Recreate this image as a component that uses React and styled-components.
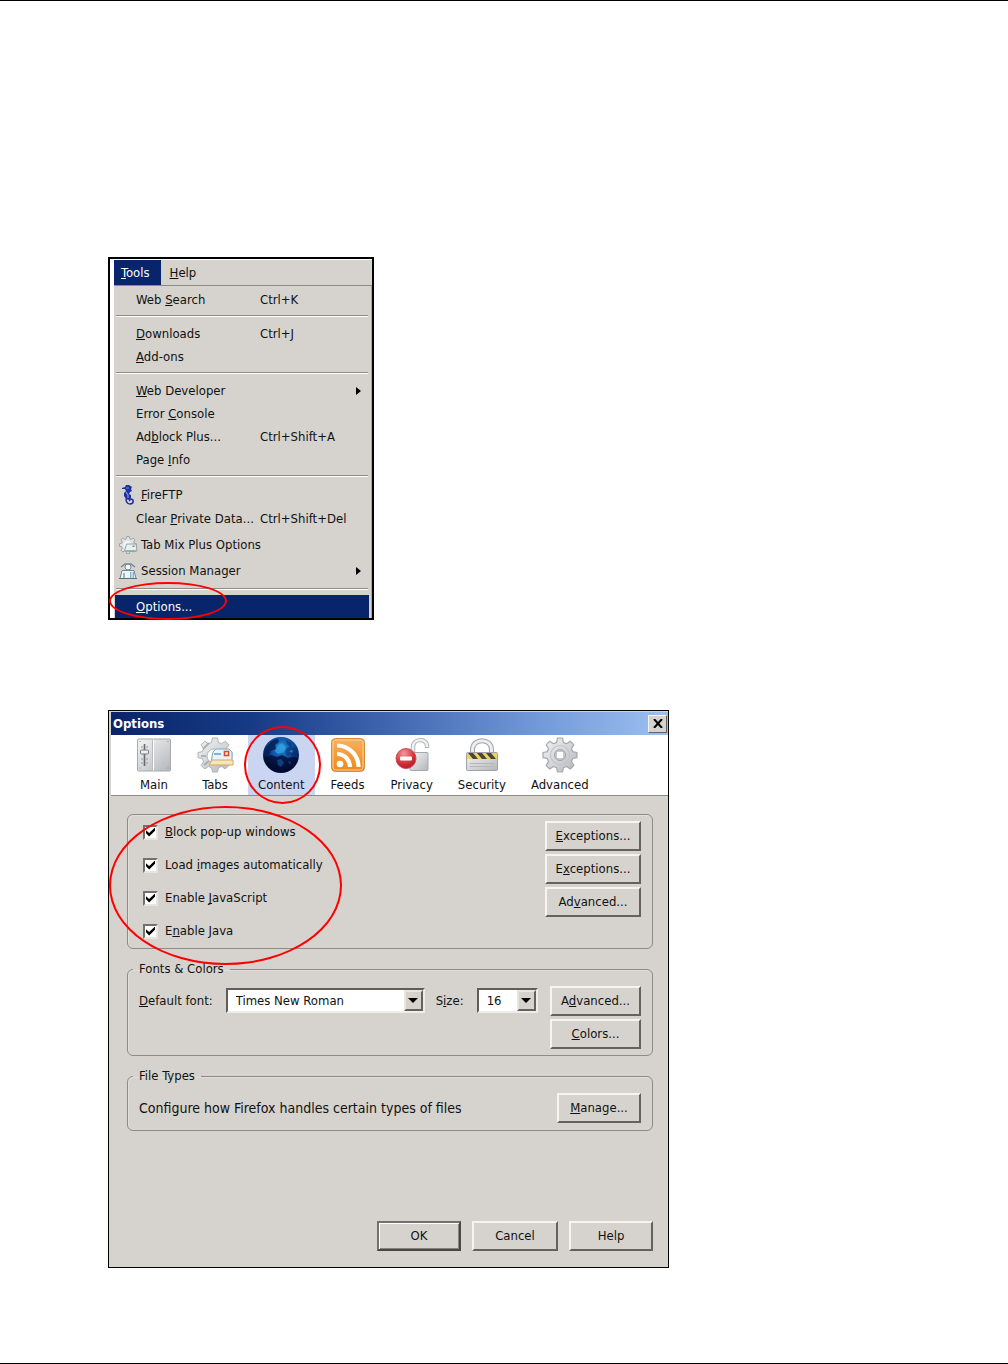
import React from "react";
import styled, { createGlobalStyle, css } from "styled-components";

const GlobalStyle = createGlobalStyle`
  :root {
    --face: #d6d3ce;
    --navy: #08246b;
    --line: #8e8b86;
    --light: #f6f4f0;
    --dark: #65625d;
    --red: #ff0000;
  }
  * {
    box-sizing: border-box;
  }
  body {
    margin: 0;
    background: #fff;
  }
  body, button, select, input {
    color: #111;
    font-family: "DejaVu Sans Condensed", Tahoma, sans-serif;
    font-size: 13px;
    line-height: 16px;
  }
  button {
    margin: 0;
    padding: 0;
    border: 0;
    background: none;
  }
  u {
    text-decoration-skip-ink: none;
  }
`;

const Page = styled.main`
  display: flex;
  flex-direction: column;
  gap: 90px;
  min-height: 100vh;
  padding: 256px 108px 80px;
  border-top: 1px solid #000;
  border-bottom: 1px solid #000;
`;

/* red ring that lies over the highlighted controls */
const Marker = styled.span`
  position: absolute;
  border: 2px solid var(--red);
  border-radius: 50%;
  pointer-events: none;
  z-index: 1;
`;

const OptionsMarker = styled(Marker)`
  left: -6px;
  top: -13px;
  width: 118px;
  height: 38px;
`;

const ContentMarker = styled(Marker)`
  left: -4px;
  top: -9px;
  width: 77px;
  height: 78px;
`;

const ChecksMarker = styled(Marker)`
  left: -34px;
  top: -15px;
  width: 233px;
  height: 159px;
`;

const MenuFrame = styled.section`
  width: 100%;
  max-width: 266px;
  padding: 1px 0 0 4px;
  border: 2px solid #000;
`;

const MenuBar = styled.nav`
  display: flex;
  height: 26px;
  background: var(--face);
  border-bottom: 1px solid var(--line);
`;

const MenuBarItem = styled.button`
  padding: 0 11px 0 7px;
  ${(p) =>
    p.$open &&
    css`
      background: var(--navy);
      color: #fff;
    `}
  & + & {
    padding-left: 9px;
  }
`;

const MenuList = styled.div`
  display: flex;
  flex-direction: column;
  padding: 2px 2px 0 1px;
  background: var(--face);
  border-right: 1px solid #aaa7a2;
`;

const MenuRow = styled.button`
  position: relative;
  display: grid;
  grid-template-columns: ${(p) => (p.$icon ? "26px 119px" : "21px 124px")} 1fr 14px;
  align-items: center;
  height: ${(p) => p.$height || 23}px;
  text-align: left;
  white-space: nowrap;
  ${(p) =>
    p.$selected &&
    css`
      background: var(--navy);
      color: #fff;
    `}
`;

const IconSlot = styled.span`
  display: flex;
  padding-left: 3px;
`;

const Separator = styled.hr`
  flex: none;
  height: 2px;
  margin: 4px 1px 5px;
  border: 0;
  border-top: 1px solid var(--line);
  background: #fff;
`;

const Dialog = styled.section`
  display: flex;
  flex-direction: column;
  width: 100%;
  max-width: 561px;
  background: var(--face);
  border: 1px solid #000;
`;

const TitleBar = styled.header`
  display: flex;
  align-items: center;
  justify-content: space-between;
  height: 23px;
  margin: 1px 0 0 2px;
  padding: 0 1px 0 2px;
  background: linear-gradient(90deg, #0a246a, #163a86 25%, #3f66b0 50%, #7096d8 75%, #9cc0f0);
`;

const Title = styled.h1`
  margin: 0;
  color: #fff;
  font-size: 13px;
  line-height: 16px;
`;

const CloseButton = styled.button`
  display: flex;
  align-items: center;
  justify-content: center;
  width: 19px;
  height: 18px;
  background: var(--face);
  border: 1px solid;
  border-color: var(--light) var(--dark) var(--dark) var(--light);
`;

const Toolbar = styled.nav`
  display: flex;
  gap: 5px;
  height: 61px;
  margin-left: 2px;
  padding-left: 15px;
  background: #fff;
  border-bottom: 1px solid var(--line);
`;

const ToolItem = styled.button`
  position: relative;
  display: flex;
  flex-direction: column;
  align-items: center;
  gap: 2px;
  padding: 0 10px;
  background: ${(p) => (p.$selected ? "#cad6f1" : "none")};
`;

const ToolIcon = styled.svg`
  display: block;
  width: 40px;
  height: 40px;
  margin: 0 -2px;
`;

const Panel = styled.div`
  display: flex;
  flex-direction: column;
  padding: 18px 15px 16px 18px;
`;

const Group = styled.fieldset`
  min-width: 0;
  margin: 0 0 ${(p) => p.$gap}px;
  padding: ${(p) => p.$pad};
  border: 1px solid var(--line);
  border-radius: 6px;
  box-shadow: inset 1px 1px 0 #e2dfda;
`;

const Legend = styled.legend`
  margin-left: -6px;
  padding: 0 6px;
  line-height: 16px;
`;

const Split = styled.div`
  position: relative;
  display: flex;
  justify-content: space-between;
  align-items: ${(p) => p.$align || "flex-start"};
`;

const Checks = styled.div`
  display: flex;
  flex-direction: column;
  gap: 17px;
  padding-top: 3px;
`;

const CheckLabel = styled.label`
  display: flex;
  align-items: center;
  gap: 7px;
`;

const CheckBox = styled.input`
  appearance: none;
  display: grid;
  place-items: center;
  width: 15px;
  height: 15px;
  margin: 0;
  background: #fff;
  border: 2px solid;
  border-color: #74716c #e8e5e0 #e8e5e0 #74716c;
  &:checked::after {
    content: "";
    width: 9px;
    height: 9px;
    background: #000;
    clip-path: polygon(0 30%, 35% 60%, 100% 0, 100% 35%, 35% 100%, 0 65%);
  }
`;

const Description = styled.p`
  margin: 0;
  font-size: 14px;
`;

const ButtonStack = styled.div`
  display: flex;
  flex-direction: column;
  gap: 3px;
`;

const PushButton = styled.button`
  width: ${(p) => p.$width}px;
  height: 30px;
  padding-bottom: 1px;
  background: var(--face);
  border: 2px solid;
  border-color: var(--light) var(--dark) var(--dark) var(--light);
  ${(p) =>
    p.$primary &&
    css`
      border-color: #74716c #4a4743 #4a4743 #74716c;
      box-shadow: inset 1px 1px 0 #fff, inset -1px -1px 0 #85827d;
    `}
`;

const Fields = styled.div`
  display: flex;
  align-items: center;
  height: 29px;
  white-space: nowrap;
`;

const SelectBox = styled.span`
  position: relative;
  flex: none;
  width: ${(p) => p.$width}px;
  margin: 0 11px 0 13px;
`;

const Select = styled.select`
  appearance: none;
  display: block;
  width: 100%;
  height: 25px;
  padding: 0 24px 0 8px;
  background: #fff;
  border: 2px solid;
  border-color: #605d59 #efece8 #efece8 #605d59;
  border-radius: 0;
`;

const SelectArrow = styled.span`
  position: absolute;
  top: 2px;
  right: 2px;
  display: flex;
  align-items: center;
  justify-content: center;
  width: 19px;
  height: 21px;
  background: var(--face);
  border: 2px solid;
  border-color: #e9e6e1 var(--dark) var(--dark) #e9e6e1;
  pointer-events: none;
`;

const Footer = styled.footer`
  display: flex;
  justify-content: flex-end;
  gap: 11px;
  padding-top: 90px;
`;

const Defs = styled.svg`
  position: absolute;
  width: 0;
  height: 0;
`;

// "_" marks the letter that is the access key
function Label({ text }) {
  const at = text.indexOf("_");
  if (at < 0) return <span>{text}</span>;
  return (
    <span>
      {text.slice(0, at)}
      <u>{text[at + 1]}</u>
      {text.slice(at + 2)}
    </span>
  );
}

const GEAR =
  "M17.4 3h5.2l.8 4.4 3.2 1.3 3.7-2.5 3.6 3.6-2.5 3.7 1.3 3.2 4.3.8v5.2l-4.3.8-1.3 3.2 2.5 3.7-3.6 3.6-3.7-2.5-3.2 1.3-.8 4.2h-5.2l-.8-4.2-3.2-1.3-3.7 2.5-3.6-3.6 2.5-3.7-1.3-3.2-4.3-.8v-5.2l4.3-.8 1.3-3.2-2.5-3.7 3.6-3.6 3.7 2.5 3.2-1.3z";

function Gradients() {
  return (
    <Defs aria-hidden="true">
      <defs>
        <linearGradient id="steel" x1="0" y1="0" x2="1" y2="1">
          <stop offset="0" stopColor="#f4f5f6" />
          <stop offset="1" stopColor="#b4b7bb" />
        </linearGradient>
        <linearGradient id="orange" x1="0" y1="0" x2="0" y2="1">
          <stop offset="0" stopColor="#f7b25c" />
          <stop offset="1" stopColor="#f0861c" />
        </linearGradient>
        <radialGradient id="globe" cx="0.52" cy="0.3" r="0.65">
          <stop offset="0" stopColor="#2790dc" />
          <stop offset="0.5" stopColor="#0b4a9c" />
          <stop offset="1" stopColor="#020c34" />
        </radialGradient>
        <radialGradient id="stop" cx="0.4" cy="0.25" r="0.8">
          <stop offset="0" stopColor="#f49a9a" />
          <stop offset="0.6" stopColor="#d8323c" />
          <stop offset="1" stopColor="#a81822" />
        </radialGradient>
      </defs>
    </Defs>
  );
}

function MainIcon() {
  return (
    <ToolIcon viewBox="0 0 40 40">
      <rect x="3.5" y="4" width="33" height="32" rx="1" fill="url(#steel)" stroke="#a7a9ac" />
      <path d="M18.5 4.5v31" stroke="#b8babd" />
      <path d="M19.5 4.5v31" stroke="#fff" />
      <path d="M10.5 9v22" stroke="#666a70" strokeWidth="1.6" />
      <path d="M7 12h2M7 24h2M12 12h2M12 24h2M7 28h2M12 28h2" stroke="#999" />
      <rect x="6.5" y="15" width="8" height="4" rx="1" fill="#eceeef" stroke="#777b80" />
      <path d="M5.5 6.5h1M5.5 33h1M33.5 6.5h1M33.5 33h1" stroke="#888" />
    </ToolIcon>
  );
}

function TabsIcon() {
  return (
    <ToolIcon viewBox="0 0 40 40">
      <path d={GEAR} fill="url(#steel)" stroke="#b0b3b7" />
      <path d="M8 14l6-6M6 21h5M9 30l5-4" stroke="#8f9398" strokeWidth="2" opacity=".6" />
      <circle cx="19" cy="21" r="7" fill="#fff" stroke="#b2b5b9" />
      <path d="M16 27l2-10 3-3h13l3 3v12z" fill="#e9f4f8" stroke="#7ba8c4" />
      <path d="M14 30l3-5h21v5z" fill="#f7e6b8" stroke="#d2a960" />
      <path d="M19 19h7" stroke="#5aa0c4" strokeWidth="1.5" />
      <rect x="29.5" y="16.5" width="4" height="4" fill="#fff" stroke="#dc4a2c" strokeWidth="1.6" />
    </ToolIcon>
  );
}

function ContentIcon() {
  return (
    <ToolIcon viewBox="0 0 40 40">
      <circle cx="20" cy="20" r="18" fill="url(#globe)" />
      <path d="M6 12c3-5 7-8 11-8l1 3-4 3 1 4-5 2-2 4-5 1c0-4 1-6 3-9z" fill="#031a4c" opacity=".8" />
      <path d="M25 5l5 3 1 4 4 1 2 6-4 3-4-3-2 2-3-4 2-4 3-1-3-3z" fill="#04285f" opacity=".5" />
      <path d="M3 22l7-2 6 2 5-2 6 3 5-1 5 1c-2 9-9 14-17 14S4 31 3 22z" fill="#010a2c" opacity=".75" />
      <path d="M17 10l4-2 4 4-2 5-6 2-3-3zM28 16l4-1-1 3z" fill="#35a9e8" opacity=".65" />
      <path d="M16 25l4-1 3 4-3 4-3-2zM27 26l3 1-1 3z" fill="#1b5cae" opacity=".6" />
    </ToolIcon>
  );
}

function FeedsIcon() {
  return (
    <ToolIcon viewBox="0 0 40 40">
      <rect x="3.5" y="3.5" width="33" height="33" rx="4" fill="url(#orange)" stroke="#d98a35" />
      <rect x="5" y="5" width="30" height="30" rx="3" fill="none" stroke="#fbd09a" />
      <circle cx="12" cy="29" r="3.3" fill="#fff" />
      <path d="M9 19a13 13 0 0 1 13 13M9 10.5A21.5 21.5 0 0 1 30.5 32" fill="none" stroke="#fff" strokeWidth="4.2" />
    </ToolIcon>
  );
}

function PrivacyIcon() {
  return (
    <ToolIcon viewBox="0 0 40 40">
      <path d="M21 17v-5c0-9 14-9 14-1v2" fill="none" stroke="#b2b5b9" strokeWidth="4.5" />
      <path d="M21 17v-5c0-9 14-9 14-1v1" fill="none" stroke="#f0f1f2" strokeWidth="2.5" />
      <rect x="18" y="17.5" width="18" height="18" rx="1" fill="url(#steel)" stroke="#a4a8ac" />
      <circle cx="14" cy="23.5" r="10" fill="url(#stop)" stroke="#c4545a" />
      <rect x="8" y="21.5" width="12" height="4" rx="1" fill="#fff" />
    </ToolIcon>
  );
}

function SecurityIcon() {
  return (
    <ToolIcon viewBox="0 0 40 40">
      <path d="M10.5 20v-5c0-12.5 19-12.5 19 0v5" fill="none" stroke="#9fa3a8" strokeWidth="5" />
      <path d="M10.5 20v-5c0-12.5 19-12.5 19 0v5" fill="none" stroke="#eceef0" strokeWidth="3" />
      <rect x="4.5" y="17.5" width="31" height="18" rx="1" fill="url(#steel)" stroke="#9fa3a8" />
      <path d="M5 18h30v6H5z" fill="#f0d264" />
      <path d="M6 18h5l5 6h-5zM15 18h5l5 6h-5zM24 18h5l5 6h-5z" fill="#4a463c" />
      <path d="M8 28.5h24M8 31.5h24" stroke="#b3b6ba" />
    </ToolIcon>
  );
}

function AdvancedIcon() {
  return (
    <ToolIcon viewBox="0 0 40 40">
      <path d={GEAR} fill="url(#steel)" stroke="#a4a8ac" strokeWidth="1.2" strokeLinejoin="round" />
      <circle cx="20" cy="20" r="9.5" fill="none" stroke="#c3c6c9" strokeWidth="1.2" />
      <circle cx="20" cy="20" r="5.5" fill="#c6c9cc" stroke="#a0a4a9" />
      <rect x="17" y="17" width="6" height="6" fill="#fff" />
    </ToolIcon>
  );
}

function SeahorseIcon() {
  return (
    <svg width="20" height="22" viewBox="0 0 20 22">
      <path
        d="M4 4l3-1 1-2 3 0 3 2-1 2 1 2-2 1-1 2 2 1 0 3-2 2-3-1-2-3 0-3 2-2-1-2-3 0z"
        fill="#1d31a0"
      />
      <path d="M9 13c-2 4 0 7 3 7 4 0 4-5 1-5-1 0-2 1-1 2" fill="none" stroke="#1d31a0" strokeWidth="1.6" />
      <path d="M8 4h3M8 8l2 3v3" stroke="#7d9be8" strokeWidth="1.2" fill="none" />
    </svg>
  );
}

function TabMixIcon() {
  return (
    <svg width="20" height="20" viewBox="0 0 40 40">
      <path d={GEAR} fill="#e0e2e4" stroke="#a0a4a8" strokeWidth="2" />
      <circle cx="19" cy="20" r="8" fill="#f4f5f5" />
      <path d="M13 32l4-14h19l2 14z" fill="#e5f0f0" stroke="#8fa7ae" strokeWidth="2" />
      <path d="M15 32h22" stroke="#78aa78" strokeWidth="2" />
      <path d="M29 21h4v3h-4z" fill="#d07060" />
    </svg>
  );
}

function SessionIcon() {
  return (
    <svg width="20" height="18" viewBox="0 0 20 18">
      <path d="M3 5l4-3h6l4 3" fill="none" stroke="#6d8793" strokeWidth="1.3" />
      <circle cx="10" cy="5" r="3" fill="#f2f7f8" stroke="#6d8793" />
      <path d="M4 8.5h12l2 8H2z" fill="#eef4f6" stroke="#6d8793" />
      <path d="M1 16.5h18M6 11v5" stroke="#58717d" />
      <path d="M12 10h4v6h-4z" fill="#7db4d8" />
      <path d="M14 10v6" stroke="#fff" />
    </svg>
  );
}

function SubmenuArrow() {
  return (
    <svg width="6" height="10" viewBox="0 0 6 10">
      <path d="M1 1l5 4-5 4z" />
    </svg>
  );
}

const menuItems = [
  { text: "Web _Search", keys: "Ctrl+K" },
  { separator: true },
  { text: "_Downloads", keys: "Ctrl+J" },
  { text: "_Add-ons" },
  { separator: true },
  { text: "_Web Developer", submenu: true },
  { text: "Error _Console" },
  { text: "Ad_block Plus...", keys: "Ctrl+Shift+A" },
  { text: "Page _Info" },
  { separator: true },
  { text: "_FireFTP", icon: <SeahorseIcon />, height: 25 },
  { text: "Clear _Private Data...", keys: "Ctrl+Shift+Del", height: 24 },
  { text: "Tab Mix Plus Options", icon: <TabMixIcon />, height: 27 },
  { text: "Session Manager", icon: <SessionIcon />, height: 26, submenu: true },
  { separator: true },
  { text: "_Options...", selected: true },
];

const tools = [
  { text: "Main", Icon: MainIcon },
  { text: "Tabs", Icon: TabsIcon },
  { text: "Content", Icon: ContentIcon, selected: true },
  { text: "Feeds", Icon: FeedsIcon },
  { text: "Privacy", Icon: PrivacyIcon },
  { text: "Security", Icon: SecurityIcon },
  { text: "Advanced", Icon: AdvancedIcon },
];

const checks = ["_Block pop-up windows", "Load _images automatically", "Enable _JavaScript", "E_nable Java"];

function DropDown({ id, value, width }) {
  return (
    <SelectBox $width={width}>
      <Select id={id} defaultValue={value}>
        <option>{value}</option>
      </Select>
      <SelectArrow>
        <svg width="10" height="5" viewBox="0 0 10 5">
          <path d="M0 0h10L5 5z" />
        </svg>
      </SelectArrow>
    </SelectBox>
  );
}

function ToolsMenu() {
  return (
    <MenuFrame>
      <MenuBar>
        <MenuBarItem $open>
          <Label text="_Tools" />
        </MenuBarItem>
        <MenuBarItem>
          <Label text="_Help" />
        </MenuBarItem>
      </MenuBar>
      <MenuList>
        {menuItems.map((item, i) =>
          item.separator ? (
            <Separator key={i} />
          ) : (
            <MenuRow key={i} $icon={item.icon} $height={item.height} $selected={item.selected}>
              <IconSlot>{item.icon}</IconSlot>
              <Label text={item.text} />
              <span>{item.keys}</span>
              {item.submenu && <SubmenuArrow />}
              {item.selected && <OptionsMarker />}
            </MenuRow>
          )
        )}
      </MenuList>
    </MenuFrame>
  );
}

function OptionsDialog() {
  return (
    <Dialog>
      <TitleBar>
        <Title>Options</Title>
        <CloseButton aria-label="Close">
          <svg width="10" height="9" viewBox="0 0 10 9">
            <path d="M1 0l8 9M9 0L1 9" stroke="#000" strokeWidth="2" />
          </svg>
        </CloseButton>
      </TitleBar>
      <Toolbar>
        {tools.map(({ text, Icon, selected }) => (
          <ToolItem key={text} $selected={selected}>
            <Icon />
            {text}
            {selected && <ContentMarker />}
          </ToolItem>
        ))}
      </Toolbar>
      <Panel>
        <Group $gap={12} $pad="6px 11px 9px 15px" aria-label="Content">
          <Split>
            <Checks>
              {checks.map((text) => (
                <CheckLabel key={text}>
                  <CheckBox type="checkbox" defaultChecked />
                  <Label text={text} />
                </CheckLabel>
              ))}
            </Checks>
            <ButtonStack>
              <PushButton $width={96}>
                <Label text="_Exceptions..." />
              </PushButton>
              <PushButton $width={96}>
                <Label text="E_xceptions..." />
              </PushButton>
              <PushButton $width={96}>
                <Label text="Ad_vanced..." />
              </PushButton>
            </ButtonStack>
            <ChecksMarker />
          </Split>
        </Group>
        <Group $gap={12} $pad="9px 11px 6px">
          <Legend>Fonts &amp; Colors</Legend>
          <Split>
            <Fields>
              <label htmlFor="font">
                <Label text="_Default font:" />
              </label>
              <DropDown id="font" value="Times New Roman" width={199} />
              <label htmlFor="size">
                <Label text="S_ize:" />
              </label>
              <DropDown id="size" value="16" width={61} />
            </Fields>
            <ButtonStack>
              <PushButton $width={91}>
                <Label text="A_dvanced..." />
              </PushButton>
              <PushButton $width={91}>
                <Label text="_Colors..." />
              </PushButton>
            </ButtonStack>
          </Split>
        </Group>
        <Group $gap={0} $pad="9px 11px 7px">
          <Legend>File Types</Legend>
          <Split $align="center">
            <Description>Configure how Firefox handles certain types of files</Description>
            <PushButton $width={84}>
              <Label text="_Manage..." />
            </PushButton>
          </Split>
        </Group>
        <Footer>
          <PushButton $width={84} $primary>
            OK
          </PushButton>
          <PushButton $width={86}>Cancel</PushButton>
          <PushButton $width={84}>Help</PushButton>
        </Footer>
      </Panel>
    </Dialog>
  );
}

export default function App() {
  return (
    <>
      <GlobalStyle />
      <Gradients />
      <Page>
        <ToolsMenu />
        <OptionsDialog />
      </Page>
    </>
  );
}
